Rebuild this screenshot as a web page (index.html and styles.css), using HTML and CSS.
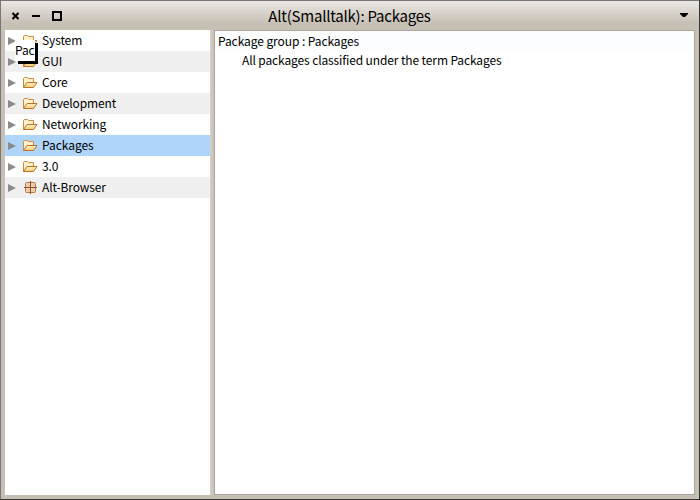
FILE: index.html
```html
<!DOCTYPE html>
<html lang="en">
<head>
<meta charset="utf-8">
<title>Alt(Smalltalk): Packages</title>
<link rel="stylesheet" href="styles.css">
</head>
<body>
<svg class="defs" width="0" height="0">
  <defs>
    <linearGradient id="fill" x1="0" y1="0" x2="0" y2="1"><stop offset="0" stop-color="#fff2c4"/><stop offset="1" stop-color="#f5ca7b"/></linearGradient>
    <symbol id="folder" viewBox="0 0 16 16">
      <path d="M1.5 13.5V4.5L2.5 3.5H5.5L6.5 4.5H11.5V8" fill="#fff0cd" stroke="#c98b3c"/>
      <path d="M1.5 13.5L5 8.5H15L11.5 13.5Z" fill="url(#fill)" stroke="#b87529" stroke-linejoin="round"/>
    </symbol>
    <symbol id="package" viewBox="0 0 16 16">
      <rect x="3.5" y="3.5" width="10" height="10" rx="1" fill="#f0d2b3" stroke="#b67a4c"/>
      <path d="M4 6.5H13M4 11.5H13M6.5 4V13M11.5 4V13" stroke="#dfae83" stroke-opacity=".3" fill="none"/>
      <path d="M8.5 2V15M2 8.5H15" stroke="#8d5127" fill="none"/>
    </symbol>
    <symbol id="arrow" viewBox="0 0 8 8"><path d="M0 0L8 4L0 8Z" fill="#8b8b8b"/></symbol>
  </defs>
</svg>
<main class="window">
  <header class="titlebar">
    <div class="controls">
      <svg width="52" height="12" viewBox="0 0 52 12"><path d="M2.5 3L8.5 9M8.5 3L2.5 9" stroke="#000" stroke-width="2" fill="none"/><path d="M22 5H30V7H22Z"/><path d="M43 2H51V10H43Z" fill="none" stroke="#000" stroke-width="2"/></svg>
    </div>
    <h1 class="title">Alt(Smalltalk): Packages</h1>
    <svg class="menu" width="8" height="4" viewBox="0 0 8 4"><path d="M0 0H8V1L5 4H3L0 1Z"/></svg>
  </header>
  <div class="panes">
    <ul class="tree">
      <li><svg class="arrow"><use href="#arrow"/></svg><svg class="icon"><use href="#folder"/></svg><span>System</span></li>
      <li><svg class="arrow"><use href="#arrow"/></svg><svg class="icon"><use href="#folder"/></svg><span>GUI</span></li>
      <li><svg class="arrow"><use href="#arrow"/></svg><svg class="icon"><use href="#folder"/></svg><span>Core</span></li>
      <li><svg class="arrow"><use href="#arrow"/></svg><svg class="icon"><use href="#folder"/></svg><span>Development</span></li>
      <li><svg class="arrow"><use href="#arrow"/></svg><svg class="icon"><use href="#folder"/></svg><span>Networking</span></li>
      <li class="selected"><svg class="arrow"><use href="#arrow"/></svg><svg class="icon"><use href="#folder"/></svg><span>Packages</span></li>
      <li><svg class="arrow"><use href="#arrow"/></svg><svg class="icon"><use href="#folder"/></svg><span>3.0</span></li>
      <li><svg class="arrow"><use href="#arrow"/></svg><svg class="icon"><use href="#package"/></svg><span>Alt-Browser</span></li>
    </ul>
    <div class="splitter"></div>
    <section class="detail">
      <p class="heading">Package group : Packages</p>
      <p class="description">All packages classified under the term Packages</p>
    </section>
  </div>
  <div class="drag">Pac</div>
</main>
</body>
</html>
```
FILE: styles.css
```css
* { box-sizing: border-box; }
body { margin: 0; font: 12px/21px "Noto Sans CJK SC", "Noto Sans", sans-serif; letter-spacing: -.12px; color: #000; }
.defs { position: absolute; }
.window { position: relative; width: 700px; height: 500px; border: 1px solid; border-color: #777 #343633 #343633 #777; background: #c7c0b5; }
.titlebar { display: grid; grid-template-columns: 60px 1fr 60px; align-items: center; height: 29px; padding: 0 6px 0 9px; background: linear-gradient(#ebe7e3, #c7c0b5 76%); }
.controls { display: flex; }
.title { margin: 0; padding-right: 4px; font-size: 15px; font-weight: 400; line-height: 29px; letter-spacing: -.23px; text-align: center; }
.menu { justify-self: end; margin: 0 5px 1px 0; }
.panes { display: flex; height: 465px; padding: 0 4px; }
.tree { width: 205px; margin: 0; padding: 0; background: #fff; list-style: none; }
.tree li { display: flex; align-items: flex-start; height: 21px; padding-left: 3px; line-height: 19px; }
.tree li:nth-child(even) { background: #f0f0f0; }
.tree .selected:nth-child(n) { background: #afd5fa; }
.tree .selected span { letter-spacing: -.04px; }
.arrow { width: 8px; height: 8px; margin-top: 7px; }
.icon { width: 16px; height: 16px; margin: 2px 4px 0 6px; }
.splitter { width: 4px; background: linear-gradient(90deg, #d7d0c7, #c7c0b5); }
.detail { flex: 1; border: 1px solid #ada69d; background: #fff; }
.heading, .description { margin: 0; height: 19px; line-height: 19px; white-space: nowrap; }
.heading { padding-left: 3px; letter-spacing: -.08px; background: #fbfdff; }
.description { padding-left: 27px; line-height: 20px; }
.drag { position: absolute; left: 14px; top: 39px; width: 20px; height: 21px; overflow: hidden; background: #fff; box-shadow: 3px 3px 0 #000; line-height: 20px; }
```
